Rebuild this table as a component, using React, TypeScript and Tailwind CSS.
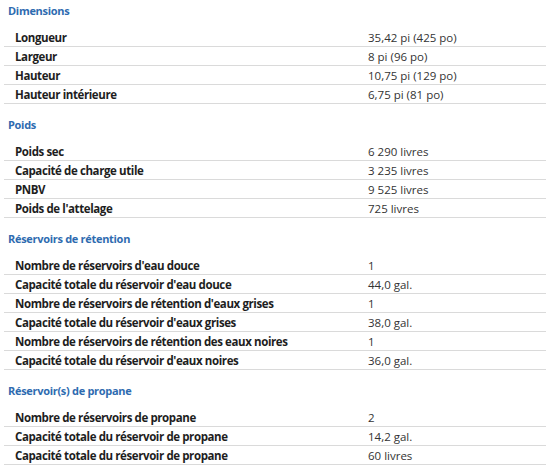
const SECTIONS: { title: string; rows: [string, string][] }[] = [
  {
    title: "Dimensions",
    rows: [
      ["Longueur", "35,42 pi (425 po)"],
      ["Largeur", "8 pi (96 po)"],
      ["Hauteur", "10,75 pi (129 po)"],
      ["Hauteur intérieure", "6,75 pi (81 po)"],
    ],
  },
  {
    title: "Poids",
    rows: [
      ["Poids sec", "6 290 livres"],
      ["Capacité de charge utile", "3 235 livres"],
      ["PNBV", "9 525 livres"],
      ["Poids de l'attelage", "725 livres"],
    ],
  },
  {
    title: "Réservoirs de rétention",
    rows: [
      ["Nombre de réservoirs d'eau douce", "1"],
      ["Capacité totale du réservoir d'eau douce", "44,0 gal."],
      ["Nombre de réservoirs de rétention d'eaux grises", "1"],
      ["Capacité totale du réservoir d'eaux grises", "38,0 gal."],
      ["Nombre de réservoirs de rétention des eaux noires", "1"],
      ["Capacité totale du réservoir d'eaux noires", "36,0 gal."],
    ],
  },
  {
    title: "Réservoir(s) de propane",
    rows: [
      ["Nombre de réservoirs de propane", "2"],
      ["Capacité totale du réservoir de propane", "14,2 gal."],
      ["Capacité totale du réservoir de propane", "60 livres"],
    ],
  },
];

export default function App() {
  return (
    <div className="w-[546px] h-[471px] bg-white overflow-hidden font-['Open_Sans',sans-serif] text-[11.5px]">
      {SECTIONS.map((s, i) => (
        <div key={s.title} className={i > 0 ? "mt-[10px]" : ""}>
          <div className="h-[28px] pt-[1px] pl-[8px] leading-[20px] text-[11px] font-bold tracking-[-0.3px] text-[#2e6bb0]">
            {s.title}
          </div>
          <div className="ml-[4px]">
            {s.rows.map(([label, value], j) => (
              <div
                key={j}
                className="flex h-[19px] pt-[1px] leading-[18px] border-b border-[#dadada]"
              >
                <div className="w-[364px] pl-[11px] font-bold tracking-[-0.4px] text-[#1e1e1e]">
                  {label}
                </div>
                <div className="text-[#333333]">{value}</div>
              </div>
            ))}
          </div>
        </div>
      ))}
    </div>
  );
}
